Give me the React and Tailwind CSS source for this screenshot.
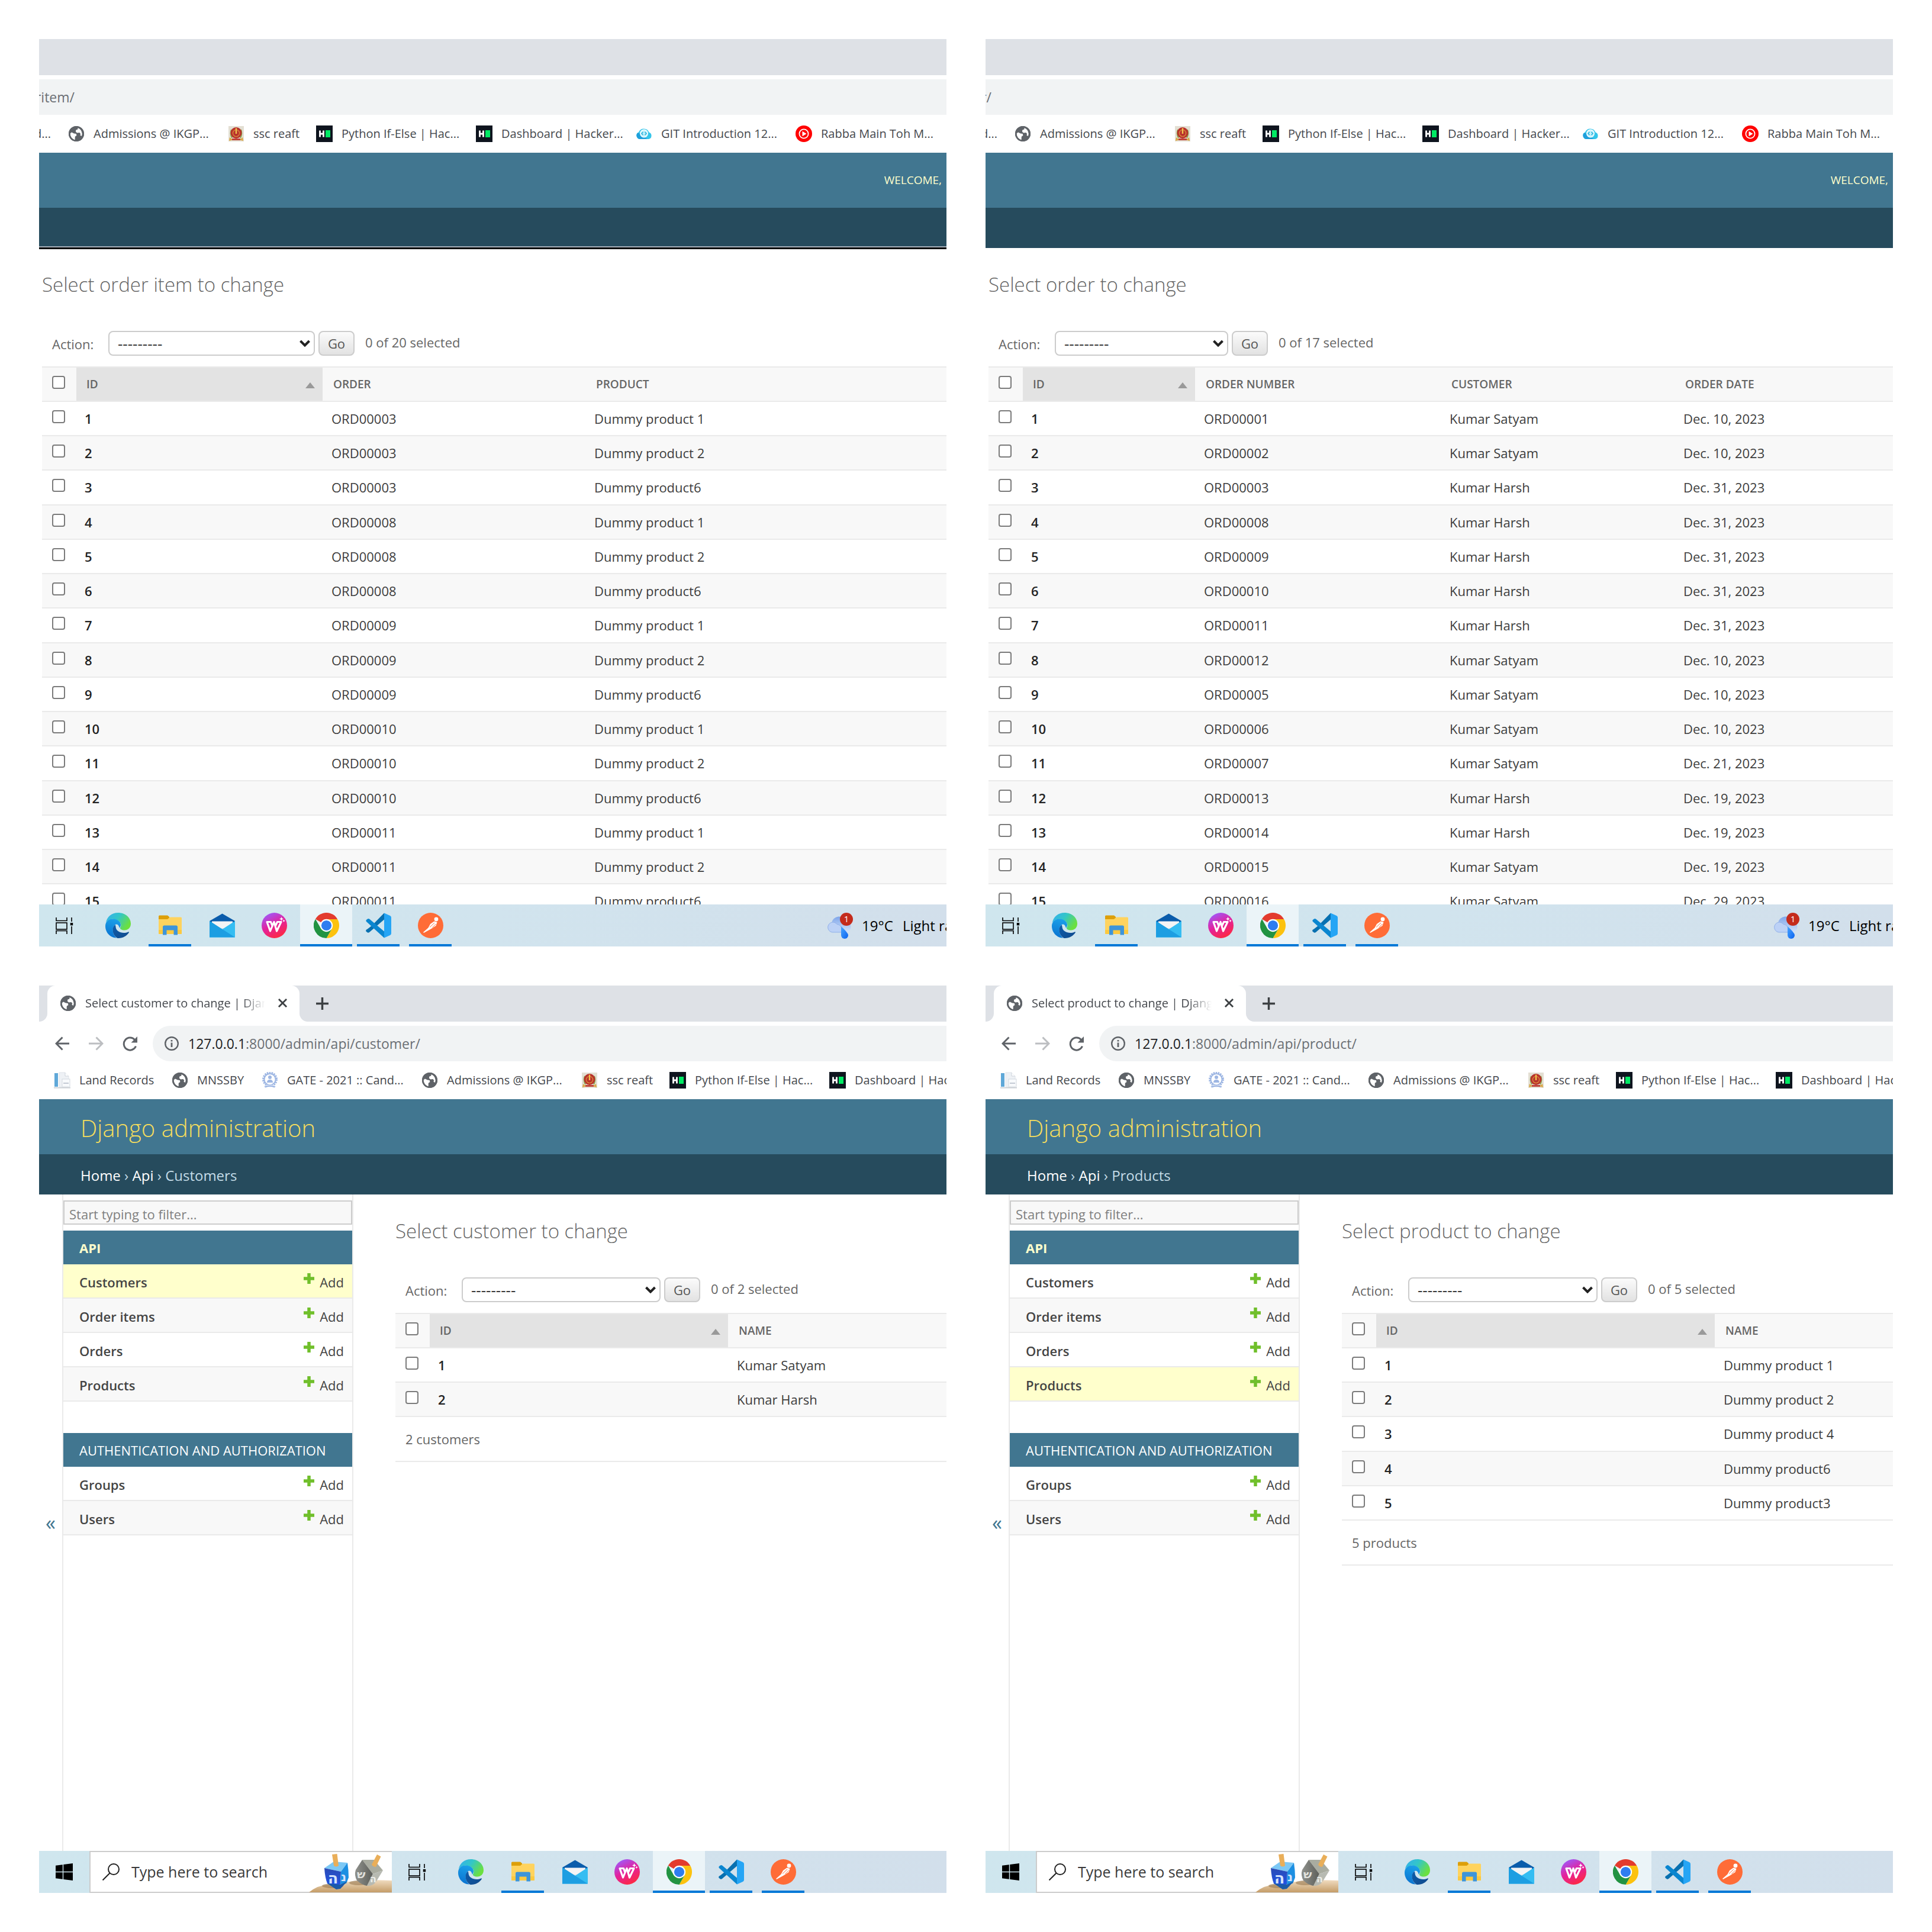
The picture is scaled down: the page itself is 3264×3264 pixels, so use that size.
import React, { useId } from "react";

/* ---------- small icons ---------- */

const Globe = () => (
  <svg viewBox="-1 -1 28 28" className="size-7 shrink-0" aria-hidden="true">
    <circle cx="13" cy="13" r="13" fill="#5f6368" />
    <path d="M2.6 12.6 L5 10.5 L9 12.6 L12.8 13 L13.4 16 L10.8 17.8 L10.6 23.6 A11.2 11.2 0 0 1 2.6 12.6Z" fill="#fff" />
    <path d="M15.4 3.2 L15.4 5.6 L12.2 6.8 L12 9.8 L14.4 11.4 L18.4 11 L20.2 13.2 L19.4 15.6 L22 17 A10.6 10.6 0 0 0 15.4 3.2Z" fill="#fff" />
    <circle cx="13" cy="13" r="11.8" fill="none" stroke="#5f6368" strokeWidth="2.4" />
  </svg>
);

const Emblem = () => (
  <svg viewBox="0 0 28 28" className="size-7 shrink-0" aria-hidden="true">
    <rect x="1" y="1" width="26" height="26" fill="#e3dfd3" />
    <path d="M3 20 Q14 30 25 20 L26 26 Q14 22 2 26Z" fill="#d9a846" />
    <path d="M6 7 Q3 14 7 21 M22 7 Q25 14 21 21" fill="none" stroke="#8aa34a" strokeWidth="2" />
    <circle cx="14" cy="12.5" r="9.4" fill="#b8322c" />
    <circle cx="14" cy="13" r="5.6" fill="none" stroke="#d98a3a" strokeWidth="1.4" />
    <path d="M14 4.5 V14" stroke="#f0c34e" strokeWidth="2.4" fill="none" />
    <path d="M7 22 h14 v3 h-14z" fill="#c0433a" />
  </svg>
);

const HackerRank = () => (
  <svg viewBox="0 0 28 28" className="size-7 shrink-0" aria-hidden="true">
    <rect width="28" height="28" fill="#0e141e" />
    <path d="M6.5 8.5 V19.5 M12.5 8.5 V19.5 M6 14 H12.5" stroke="#fff" strokeWidth="2.8" />
    <rect x="16" y="8" width="8" height="12" fill="#00ea64" />
  </svg>
);

const CloudEye = () => (
  <svg viewBox="0 0 28 28" className="size-7 shrink-0" aria-hidden="true">
    <path d="M6.5 23 A6.3 6.3 0 0 1 5 11.2 A9.5 9.5 0 0 1 22.5 11.5 A6 6 0 0 1 22 23Z" fill="#35c5ea" />
    <path d="M6.5 23 A6.3 6.3 0 0 1 3 12.5 Q8 13 12 17 T20 23Z" fill="#1ea0dc" />
    <circle cx="14" cy="13.5" r="6.2" fill="#bff0fb" stroke="#fff" strokeWidth="1.4" />
    <path d="M12.5 11 L10 13.5 L12.5 16 M15.5 11 L18 13.5 L15.5 16" fill="none" stroke="#2cb3dd" strokeWidth="1.6" />
  </svg>
);

const YtMusic = () => (
  <svg viewBox="0 0 28 28" className="size-7 shrink-0" aria-hidden="true">
    <circle cx="14" cy="14" r="14" fill="#f00" />
    <circle cx="14" cy="14" r="7.6" fill="none" stroke="#fff" strokeWidth="1.8" />
    <path d="M11.5 9.8 L18.5 14 L11.5 18.2Z" fill="#fff" />
  </svg>
);

const LandDoc = () => (
  <svg viewBox="0 0 28 28" className="size-7 shrink-0" aria-hidden="true">
    <rect x="1" y="2" width="6" height="23" fill="#5fa8d8" />
    <rect x="0" y="26" width="28" height="1.5" fill="#c4c9cf" />
    <path d="M9 1 H19 L25 7 V25 H9Z" fill="#eef1f5" stroke="#dde2e8" strokeWidth="1" />
    <path d="M19 1 V7 H25" fill="#fff" stroke="#cdd3db" strokeWidth="1" />
    <rect x="14" y="12" width="13" height="13" fill="#f8fafc" stroke="#d3d9e0" strokeWidth="1" />
    <path d="M16 19 H25" stroke="#c3cad4" strokeWidth="2" />
  </svg>
);

const GateSeal = () => (
  <svg viewBox="0 0 28 28" className="size-7 shrink-0" aria-hidden="true">
    <circle cx="14" cy="12.5" r="11.4" fill="none" stroke="#9db6e3" strokeWidth="3" strokeDasharray="2.6 1.4" />
    <circle cx="14" cy="12.5" r="9.6" fill="#fff" stroke="#9db6e3" strokeWidth="2" />
    <circle cx="14" cy="9" r="3" fill="#9db6e3" />
    <path d="M9 18 Q9 13 14 13 T19 18Z" fill="#9db6e3" />
    <path d="M4 24 Q14 20 24 24 L22 27 Q14 23.5 6 27Z" fill="#9db6e3" stroke="#fff" strokeWidth="0.8" />
  </svg>
);

const Plus = () => (
  <svg viewBox="0 0 18 18" className="-mt-3 size-[18px] shrink-0" aria-hidden="true">
    <path d="M9 0 V18 M0 9 H18" stroke="#70bf2b" strokeWidth="5.5" />
  </svg>
);

/* ---------- task bar icons ---------- */

const TaskView = () => (
  <svg viewBox="0 0 30 28" className="h-7 w-[30px]" fill="none" stroke="#000" strokeWidth="1.6" aria-hidden="true">
    <path d="M1 0 V5.500 H19 V0" />
    <rect x="1" y="9" width="18" height="11" />
    <path d="M1 28 V22.500 H19 V28" />
    <path d="M27 0 V7 M27 15 V28" />
    <rect x="24.8" y="9" width="4.400" height="4.400" fill="#000" stroke="none" />
  </svg>
);

const Edge = () => {
  const id = useId();
  return (
    <svg viewBox="0 0 43 43" className="size-[43px]" aria-hidden="true">
      <defs>
        <linearGradient id={id + "a"} x1="0" y1="0" x2="1" y2="0.5">
          <stop offset="0" stopColor="#35aef0" />
          <stop offset="0.5" stopColor="#33c6c8" />
          <stop offset="1" stopColor="#6be03f" />
        </linearGradient>
        <linearGradient id={id + "b"} x1="0.5" y1="0" x2="0.3" y2="1">
          <stop offset="0" stopColor="#1a9fe8" />
          <stop offset="1" stopColor="#0a72d0" />
        </linearGradient>
        <linearGradient id={id + "c"} x1="0" y1="0" x2="1" y2="1">
          <stop offset="0" stopColor="#0d5cab" />
          <stop offset="1" stopColor="#114a8c" />
        </linearGradient>
      </defs>
      <path d="M0.8 17 C2.5 7 10.5 0 21.5 0 C34 0 43 8.5 43 18.5 C43 25.5 38 29.5 32.5 29.5 C27.5 29.5 24.5 27.5 25 25.5 C27.5 22 26.5 16.5 22 13.5 C14 8.5 4.5 11 0.8 17Z" fill={`url(#${id}a)`} />
      <path d="M0.2 20 C1.5 13.5 7 10.500 13 10.5 C20.500 10.5 26 15 26 20.5 C26 23 24.5 25 24 26 C23 22 20.5 18 17 20 C11 24 11 36 19 42.5 C8 43 -1.5 32 0.2 20Z" fill={`url(#${id}b)`} />
      <path d="M16.500 20.5 C10 25 11.5 38 20.5 42.9 C29 43.5 36 39.5 39.8 33.5 C40.2 32.500 39.5 32 38.5 32.4 C30 36.5 18 32.5 17.5 24 C17.3 22 17.3 21 16.5 20.5Z" fill={`url(#${id}c)`} />
    </svg>
  );
};

const Folder = () => (
  <svg viewBox="0 0 43 43" className="size-[43px]" aria-hidden="true">
    <path d="M2 6 Q2 4.5 3.5 4.5 H17 L20 7 V12 H2Z" fill="#dd9f0a" />
    <path d="M2 11 H17 L21 7.5 H39.500 Q41 7.5 41 9 V36 H2Z" fill="#ffd35e" />
    <path d="M2 29 H41 V34.5 Q41 36 39.5 36 H3.5 Q2 36 2 34.5Z" fill="#fcc93f" />
    <path d="M9 37.5 V24 Q9 21.5 11.5 21.5 H31.5 Q34 21.5 34 24 V37.5 H27.5 V29.5 H15.5 V37.5Z" fill="#3e95d9" />
  </svg>
);

const Mail = () => (
  <svg viewBox="0 0 43 43" className="size-[43px]" aria-hidden="true">
    <path d="M0 14 L21.5 1.5 L43 14 V24 H0Z" fill="#0a5cab" />
    <path d="M4 14.5 H39 V26 H4Z" fill="#f4f4f5" />
    <path d="M0 14 L21.5 28 L43 14 V41.5 H0Z" fill="#35bdf2" />
    <path d="M0 14 L43 41.5 H0Z" fill="#1d9ee2" />
  </svg>
);

const Wps = () => {
  const id = useId();
  return (
    <svg viewBox="0 0 43 43" className="size-[43px]" aria-hidden="true">
      <defs>
        <linearGradient id={id} x1="0.2" y1="0" x2="0.7" y2="1">
          <stop offset="0" stopColor="#9b5cff" />
          <stop offset="0.5" stopColor="#e4219c" />
          <stop offset="1" stopColor="#ff2a3c" />
        </linearGradient>
      </defs>
      <circle cx="21.5" cy="21.5" r="21.5" fill={`url(#${id})`} />
      <path d="M17.5 21 L15.500 15.500 H9 L14.500 31 L21 15.500 L25.500 31 L33 15.500 H26.500 L24 21" fill="none" stroke="#fff" strokeWidth="3.2" strokeLinejoin="round" strokeLinecap="round" />
      <path d="M33.5 7 l1 2.5 l2.5 1 l-2.5 1 l-1 2.5 l-1 -2.5 l-2.5 -1 l2.5 -1z M37.5 11.5 l.7 1.600 l1.6 .7 l-1.6 .7 l-.7 1.6 l-.7 -1.6 l-1.6 -.7 l1.6 -.7z" fill="#fff" />
    </svg>
  );
};

const Chrome = () => (
  <svg viewBox="0 0 43 43" className="size-[43px]" aria-hidden="true">
    <path d="M21.5 21.5 L2.9 10.7 A21.5 21.5 0 0 1 40.1 10.7Z" fill="#e33b2e" />
    <path d="M21.5 11 H40.3 A21.5 21.5 0 0 1 21.5 43 L31 26.5Z" fill="#fcc20f" />
    <path d="M2.9 10.7 A21.5 21.5 0 0 0 21.5 43 L30.8 26.8 L12.2 26.8Z" fill="#229342" />
    <circle cx="21.5" cy="21.5" r="10.7" fill="#fff" />
    <circle cx="21.5" cy="21.5" r="8.6" fill="#2f7df0" />
  </svg>
);

const VsCode = () => (
  <svg viewBox="0 0 43 43" className="size-[43px]" aria-hidden="true">
    <path d="M31 0.5 L10.5 21.5 L3.5 27 L0.5 29 Q-0.3 31 1 32 L3 33.5 Q4.5 34.3 6 33 L31 11.5Z" fill="#0870b0" />
    <path d="M6 10.5 Q4.5 9.5 3 10.5 L1 12 Q-0.3 13.5 1 15 L31 42.5 V31.5Z" fill="#0a86d0" />
    <path d="M31 0.5 L41 5 Q43 6 43 8 V35 Q43 37 41 38 L31 42.5 Z" fill="#25a5f5" />
  </svg>
);

const Postman = () => (
  <svg viewBox="0 0 43 43" className="size-[43px]" aria-hidden="true">
    <circle cx="21.5" cy="21.5" r="21.5" fill="#ff6c37" />
    <circle cx="31" cy="11" r="3.4" fill="#fff" />
    <path d="M27.500 14.500 L32.500 16 L30.500 22 L25 25.500 L21 28 L10 34 L9 33 L17.500 25.500 L21 19Z" fill="#fff" />
    <path d="M20 24.500 L28 17 M24.500 25 L30.500 19" stroke="#ff6c37" strokeWidth="1" />
  </svg>
);

const WindowsLogo = () => (
  <svg viewBox="0 0 29 29" className="size-[29px]" aria-hidden="true">
    <path d="M0 3.8 L11.8 2.2 V13.8 H0Z M13.2 2 L29 0 V13.8 H13.2Z M0 15.2 H11.8 V26.8 L0 25.2Z M13.2 15.2 H29 V29 L13.2 27Z" fill="#000" />
  </svg>
);

const Dreidels = () => {
  const id = useId();
  return (
    <svg viewBox="0 0 140 69" className="h-[69px] w-[140px] shrink-0" aria-hidden="true">
      <defs>
        <linearGradient id={id + "s"} x1="0" y1="0" x2="0" y2="1">
          <stop offset="0" stopColor="#f0dcc0" />
          <stop offset="1" stopColor="#c59d68" />
        </linearGradient>
        <linearGradient id={id + "b"} x1="0" y1="0" x2="0" y2="1">
          <stop offset="0" stopColor="#2a4bb4" />
          <stop offset="1" stopColor="#1f55ee" />
        </linearGradient>
        <linearGradient id={id + "g"} x1="0" y1="0" x2="1" y2="0">
          <stop offset="0" stopColor="#8f918c" />
          <stop offset="1" stopColor="#5d5f5a" />
        </linearGradient>
      </defs>
      <path d="M0 69 Q14 57 36 55 Q56 52 78 50 Q100 47 140 49 V69Z" fill={`url(#${id}s)`} />
      <ellipse cx="40" cy="58" rx="18" ry="4" fill="#8b6a40" opacity="0.5" />
      <ellipse cx="84" cy="53" rx="16" ry="4" fill="#8b6a40" opacity="0.5" />
      <path d="M26 28 L42 17 L65 19 L54 34Z" fill="#7cc8f5" />
      <path d="M26 28 L54 34 L53 55 L45 62 L31 54 Q27 44 26 28Z" fill={`url(#${id}b)`} />
      <path d="M54 34 L65 19 Q67 32 67 44 L63 54 L53 56Z" fill="#1c8fe2" />
      <path d="M31 54 L53 56 L65 50 L53 63 L46 64Z" fill="#1c5aa8" />
      <path d="M39 5 L47.500 4 L50 24 Q46 27 42 24Z" fill="#e9ae59" />
      <path d="M90 14 H110 L125 32 L108 38Z" fill="#a9aca0" />
      <path d="M90 14 L108 38 L98 58 Q90 57 81 49 Q76 40 79 31Z" fill={`url(#${id}g)`} />
      <path d="M108 38 L125 32 L114 50 Q108 59 98 58Z" fill="#b7bab2" />
      <path d="M115 5 L121.500 8.500 L113 26 Q108 26 106 22Z" fill="#e9ae59" />
      <text x="32" y="54" fontSize="25" fontWeight="700" fill="#d5e3fb" fontFamily="DejaVu Sans, sans-serif">ה</text>
      <text x="54" y="50" fontSize="20" fontWeight="700" fill="#d5e3fb" fontFamily="DejaVu Sans, sans-serif">נ</text>
      <text x="81" y="45" fontSize="19" fontWeight="700" fill="#e0e1dd" fontFamily="DejaVu Sans, sans-serif">ש</text>
      <text x="103" y="52" fontSize="16" fontWeight="700" fill="#eceeea" fontFamily="DejaVu Sans, sans-serif">ה</text>
    </svg>
  );
};

const RainCloud = () => {
  const id = useId();
  return (
    <svg viewBox="0 0 44 44" className="size-11" aria-hidden="true">
      <defs>
        <linearGradient id={id} x1="0" y1="0" x2="0" y2="1">
          <stop offset="0" stopColor="#7fa6ea" />
          <stop offset="1" stopColor="#d3e2fa" />
        </linearGradient>
        <linearGradient id={id + "d"} x1="0" y1="0" x2="1" y2="1">
          <stop offset="0" stopColor="#4aa6ff" />
          <stop offset="1" stopColor="#0b63f0" />
        </linearGradient>
      </defs>
      <path d="M8 17 A13 12 0 0 1 33 14 A10 10 0 0 1 34 33 H10Z" fill={`url(#${id})`} />
      <path d="M9 33 A8.5 8.5 0 1 1 17 19.5 A9 9 0 0 1 24 33Z" fill="#bcd1f6" stroke="#8fb0ea" strokeWidth="1" />
      <path d="M24 23 Q36 34 36 38 A6 6 0 0 1 24 38Z" fill={`url(#${id}d)`} />
    </svg>
  );
};

/* ---------- browser chrome ---------- */

const bookmarkList = [
  { label: "Land Records", icon: LandDoc, width: "w-[127px]" },
  { label: "MNSSBY", icon: Globe, width: "w-20" },
  { label: "GATE - 2021 :: Cand...", icon: GateSeal, width: "w-[198px]" },
  { label: "Admissions @ IKGP...", icon: Globe, width: "w-[198px]" },
  { label: "ssc reaft", icon: Emblem, width: "w-[77px]" },
  { label: "Python If-Else | Hac...", icon: HackerRank, width: "w-[198px]" },
  { label: "Dashboard | Hacker...", icon: HackerRank, width: "w-[198px]" },
  { label: "GIT Introduction 12...", icon: CloudEye, width: "w-[198px]" },
  { label: "Rabba Main Toh M...", icon: YtMusic, width: "w-[198px]" },
];

function Bookmarks({ scrolled }) {
  const items = scrolled ? bookmarkList.slice(3) : bookmarkList.slice(0, 7);
  return (
    <nav aria-label="Bookmarks" className={"flex h-16 items-center overflow-hidden whitespace-nowrap text-[20px] text-[#45484d] " + (scrolled ? "" : "pl-[25px]")}>
      {scrolled && (
        <a href="#gate" className="mr-[29px] flex w-5 shrink-0 justify-end overflow-hidden">
          d...
        </a>
      )}
      {items.map(({ label, icon: Icon, width }) => (
        <a key={label} href="#bookmark" className="mr-[29px] flex shrink-0 items-center gap-[15px]">
          <Icon />
          <span className={width}>{label}</span>
        </a>
      ))}
    </nav>
  );
}

function TabStrip({ title }) {
  if (!title) return <div className="h-[61px] bg-[#dee1e6]" />;
  return (
    <div className="flex h-[61px] bg-[#dee1e6]">
      <div className="w-[14px] bg-white">
        <div className="h-full rounded-br-[14px] bg-[#dee1e6]" />
      </div>
      <div className="flex w-[426px] items-center rounded-t-[14px] bg-white pr-[21px] pb-0.5 pl-[21px]">
        <Globe />
        <span className="ml-[15px] w-[304px] overflow-hidden text-[20px] whitespace-nowrap text-[#45484d] [mask-image:linear-gradient(to_right,#000_87%,transparent)]">
          {title}
        </span>
        <button type="button" aria-label="Close tab" className="ml-auto">
          <svg viewBox="0 0 16 16" className="size-[15px]" stroke="#3c4043" strokeWidth="3">
            <path d="M1 1 L15 15 M15 1 L1 15" />
          </svg>
        </button>
      </div>
      <div className="w-7 bg-white">
        <div className="h-full rounded-bl-[14px] bg-[#dee1e6]" />
      </div>
      <button type="button" aria-label="New tab">
        <svg viewBox="0 0 22 22" className="size-[21px]" stroke="#3c4043" strokeWidth="3.6">
          <path d="M11 0 V22 M0 11 H22" />
        </svg>
      </button>
    </div>
  );
}

function AddressBar({ path, tail }) {
  if (tail) {
    return (
      <div className="mt-[7px] flex h-[60px] items-center overflow-hidden bg-[#f1f3f4] text-[23px] whitespace-nowrap text-[#6b6f74]">
        <span className={"flex justify-end overflow-hidden " + tail.width}>{tail.text}</span>
      </div>
    );
  }
  return (
    <div className="mt-[7px] flex h-[60px] items-center pl-[27px]">
      <div className="flex gap-8 text-[#5f6368]">
        <button type="button" aria-label="Back">
          <svg viewBox="0 0 25 24" className="h-6 w-[25px]" fill="none" stroke="currentColor" strokeWidth="3">
            <path d="M24 12 H2 M12.5 1.5 L2 12 L12.5 22.5" />
          </svg>
        </button>
        <button type="button" aria-label="Forward" className="text-[#bcbec1]">
          <svg viewBox="0 0 25 24" className="h-6 w-[25px]" fill="none" stroke="currentColor" strokeWidth="3">
            <path d="M0 12 H22 M12.5 1.5 L23 12 L12.5 22.5" />
          </svg>
        </button>
        <button type="button" aria-label="Reload">
          <svg viewBox="0 0 25 25" className="size-[25px]" fill="none" stroke="currentColor" strokeWidth="3">
            <path d="M22.5 16.5 A10.5 10.5 0 1 1 20.5 5.5" />
            <path d="M25 0 V10.500 H14.5Z" fill="currentColor" stroke="none" />
          </svg>
        </button>
      </div>
      <div className="ml-[26px] flex h-full min-w-0 flex-1 items-center rounded-l-full bg-[#f1f3f4] pl-5 text-[23px] whitespace-nowrap text-[#6b6f74]">
        <svg viewBox="0 0 24 24" className="size-6 shrink-0" fill="none" stroke="#5f6368" strokeWidth="2.4" aria-hidden="true">
          <circle cx="12" cy="12" r="10.8" />
          <path d="M12 10.5 V18 M12 6 V8.6" strokeWidth="2.8" />
        </svg>
        <span className="ml-4">
          <span className="text-[#202124]">127.0.0.1</span>:8000{path}
        </span>
      </div>
    </div>
  );
}

/* ---------- admin page ---------- */

function ActionBar({ selected, selectWidth, id }) {
  return (
    <form className="mt-[54px] flex h-[42px] items-center pl-[17px] text-[22px] text-[#666]" onSubmit={(e) => e.preventDefault()}>
      <label htmlFor={id} className="w-[95px] pt-0.5">
        Action:
      </label>
      <span className={"relative h-full shrink-0 " + selectWidth}>
        <select id={id} className="size-full appearance-none rounded-lg border-2 border-[#ccc] bg-white pl-[14px] text-[26px] text-[#333]">
          <option>---------</option>
          <option>Delete selected</option>
        </select>
        <svg viewBox="0 0 18 12" className="pointer-events-none absolute top-[15px] right-2 h-3 w-[18px]" fill="none" stroke="#222" strokeWidth="4" aria-hidden="true">
          <path d="M1.5 2 L9 9.5 L16.5 2" />
        </svg>
      </span>
      <button type="submit" className="ml-[6px] h-full w-[61px] rounded-lg border-2 border-[#ccc] bg-linear-to-b from-[#fbfbfb] to-[#e2e2e2] text-[#555]">
        Go
      </button>
      <span className="mb-1 ml-[18px]">{selected}</span>
    </form>
  );
}

const Check = ({ label }) => (
  <input
    type="checkbox"
    aria-label={label}
    className="block size-[22px] appearance-none rounded border-2 border-[#7b7b7b] bg-white"
  />
);

function ResultTable({ columns, widths, rows, footer }) {
  return (
    <>
      <table className="mt-[18px] w-full table-fixed border-collapse text-left text-[22px] whitespace-nowrap text-[#3d3d3d]">
        <colgroup>
          <col className="w-[58px]" />
          {widths.map((w, i) => (
            <col key={i} className={w} />
          ))}
          <col />
        </colgroup>
        <thead>
          <tr className="h-[58px] border-y-2 border-[#eaeaea] bg-[#f8f8f8] text-[19px] text-[#666]">
            <th className="pt-[14px] pl-[17px] align-top">
              <Check label="Select all" />
            </th>
            <th className="bg-[#e3e3e3] pr-[13px] pl-[17px] font-semibold">
              <span className="flex items-center justify-between">
                ID
                <svg viewBox="0 0 16 10" className="mt-1 h-[10px] w-4" aria-hidden="true">
                  <path d="M8 0 L16 10 H0Z" fill="#999" />
                </svg>
              </span>
            </th>
            {columns.map((c) => (
              <th key={c} className="pl-[18px] font-semibold">
                {c}
              </th>
            ))}
          </tr>
        </thead>
        <tbody>
          {rows.map((row, i) => (
            <tr key={i} className="h-[58px] border-b-2 border-[#eaeaea] even:bg-[#f8f8f8] nth-[4n-1]:h-[59px]">
              <td className="pt-[14px] pl-[17px] align-top">
                <Check label={"Select row " + (i + 1)} />
              </td>
              <th className="pl-[14px] font-semibold text-[#222]">
                <a href="#row">{i + 1}</a>
              </th>
              {row.map((cell, j) => (
                <td key={j} className="pl-[15px]">
                  {cell}
                </td>
              ))}
            </tr>
          ))}
        </tbody>
      </table>
      {footer && <p className="flex h-[76px] items-center border-b-2 border-[#eaeaea] pl-[17px] text-[22px] text-[#666]">{footer}</p>}
    </>
  );
}

const sections = [
  { title: "API", bold: true, items: ["Customers", "Order items", "Orders", "Products"] },
  { title: "AUTHENTICATION AND AUTHORIZATION", items: ["Groups", "Users"] },
];

function Sidebar({ current }) {
  return (
    <>
      <button type="button" aria-label="Toggle navigation" className="w-[39px] shrink-0 text-[34px] text-[#417690]">
        «
      </button>
      <aside className="w-[492px] shrink-0 border-x-2 border-[#eaeaea] pt-[10px]">
        <input
          type="text"
          aria-label="Filter navigation items"
          placeholder="Start typing to filter..."
          className="block h-[41px] w-full border-2 border-[#ccc] bg-[#f8f8f8] pt-1 pl-2 text-[22px] placeholder:text-[#808080]"
        />
        {sections.map((s, i) => (
          <section key={s.title} className={i ? "mt-[53px]" : "mt-[10px]"}>
            <h2 className={"flex h-[57px] items-center bg-[#417690] pt-0.5 pl-[27px] text-[22px] whitespace-nowrap " + (s.bold ? "font-bold text-[#ffc]" : "text-white")}>
              {s.title}
            </h2>
            {s.items.map((item) => (
              <div
                key={item}
                className={
                  "flex h-[58px] items-center border-b-2 border-[#eaeaea] pt-1 pr-[14px] pl-[27px] text-[22px] text-[#444] " +
                  (item === current ? "bg-[#ffc]" : "odd:bg-[#f8f8f8]")
                }
              >
                <a href="#model" className="font-semibold">
                  {item}
                </a>
                <a href="#add" className="ml-auto flex items-center gap-[9px]">
                  <Plus />
                  Add
                </a>
              </div>
            ))}
          </section>
        ))}
      </aside>
    </>
  );
}

function AdminHeader({ crumb, ruled }) {
  return (
    <header className="whitespace-nowrap">
      <div className="flex h-[93px] items-center bg-[#417690]">
        {crumb ? (
          <h1 className="pt-1 pl-[70px] text-[40px] font-light text-[#f5dd5d]">Django administration</h1>
        ) : (
          <span className="mr-2 ml-auto text-[19px] text-[#ffc]">WELCOME,</span>
        )}
      </div>
      <div className={"flex items-center bg-[#264b5d] text-[24px] text-[#c4dce8] " + (ruled ? "-mb-0.5 h-[70px] border-b-3 border-[#0d0d0d] shadow-[inset_0_-2px_#a3adb8]" : "h-[68px]")}>
        {crumb && (
          <nav aria-label="Breadcrumbs" className="pt-1 pl-[70px]">
            <a href="#home" className="text-white">Home</a> › <a href="#api" className="text-white">Api</a> › {crumb}
          </nav>
        )}
      </div>
    </header>
  );
}

/* ---------- Windows task bar ---------- */

const apps = [
  { name: "Edge", icon: Edge },
  { name: "File Explorer", icon: Folder, open: true },
  { name: "Mail", icon: Mail },
  { name: "WPS Office", icon: Wps },
  { name: "Chrome", icon: Chrome, active: true },
  { name: "VS Code", icon: VsCode, open: true },
  { name: "Postman", icon: Postman, open: true },
];

function TaskBar({ search }) {
  return (
    <footer className="flex h-[71px] shrink-0 overflow-hidden bg-linear-to-r from-[#cfe6ee] via-[#d1e4ee] to-[#d2dfeb] whitespace-nowrap text-black">
      {search && (
        <>
          <button type="button" aria-label="Start" className="flex w-[85px] shrink-0 items-center justify-center">
            <WindowsLogo />
          </button>
          <label className="flex w-[511px] shrink-0 items-center border-2 border-r-0 border-[#ccc] bg-white pl-5">
            <svg viewBox="0 0 29 29" className="size-[29px] shrink-0" fill="none" stroke="#222" strokeWidth="2" aria-hidden="true">
              <circle cx="19" cy="10" r="9" />
              <path d="M12.5 16.5 L0.5 28.5" />
            </svg>
            <input
              type="text"
              aria-label="Search"
              placeholder="Type here to search"
              className="ml-5 min-w-0 flex-1 text-[25px] placeholder:text-[#3a3a3a]"
            />
            <Dreidels />
          </label>
        </>
      )}
      <button type="button" aria-label="Task view" className="flex w-[89px] shrink-0 items-center justify-center pr-1">
        <TaskView />
      </button>
      {apps.map(({ name, icon: Icon, open, active }) => (
        <button
          key={name}
          type="button"
          aria-label={name}
          className={"flex w-[88px] shrink-0 flex-col items-stretch " + (active ? "bg-[#ebf4f8]" : "px-2")}
        >
          <span className="flex flex-1 items-center justify-center pt-1">
            <Icon />
          </span>
          <span className={"h-1 " + (open || active ? "bg-[#0078d7]" : "")} />
        </button>
      ))}
      {!search && (
        <div className="mr-[-31px] ml-auto flex shrink-0 items-center text-[24px]">
          <span className="relative">
            <RainCloud />
            <span className="absolute top-0 right-0 flex size-[22px] items-center justify-center rounded-full bg-[#c42b1c] text-[15px] leading-none text-white">
              1
            </span>
          </span>
          <span className="ml-[15px]">19°C</span>
          <span className="ml-4">Light rain</span>
        </div>
      )}
    </footer>
  );
}

/* ---------- one browser window ---------- */

function Screen({ tab, path, tail, crumb, ruled, title, ...list }) {
  const id = useId();
  return (
    <article className="flex aspect-square min-w-0 flex-col overflow-hidden bg-white">
      <TabStrip title={tab} />
      <AddressBar path={path} tail={tail} />
      <Bookmarks scrolled={!crumb} />
      <AdminHeader crumb={crumb} ruled={ruled} />
      <div className="flex min-h-0 flex-1 overflow-hidden">
        {crumb && <Sidebar current={crumb} />}
        <main className={"min-w-0 flex-1 pt-[38px] " + (crumb ? "pl-[71px]" : "pl-[5px]")}>
          <h2 className="h-12 text-[33px] leading-[48px] font-light whitespace-nowrap text-[#666]">{title}</h2>
          <ActionBar id={id} selected={list.selected} selectWidth={list.selectWidth} />
          <ResultTable columns={list.columns} widths={list.widths} rows={list.rows} footer={list.footer} />
        </main>
      </div>
      <TaskBar search={!!crumb} />
    </article>
  );
}

const products = ["Dummy product 1", "Dummy product 2", "Dummy product6"];
const orderItems = ["ORD00003", "ORD00008", "ORD00009", "ORD00010", "ORD00011"].flatMap((order) =>
  products.map((p) => [order, p])
);

const orders = [
  ["ORD00001", "Kumar Satyam", "Dec. 10, 2023"],
  ["ORD00002", "Kumar Satyam", "Dec. 10, 2023"],
  ["ORD00003", "Kumar Harsh", "Dec. 31, 2023"],
  ["ORD00008", "Kumar Harsh", "Dec. 31, 2023"],
  ["ORD00009", "Kumar Harsh", "Dec. 31, 2023"],
  ["ORD00010", "Kumar Harsh", "Dec. 31, 2023"],
  ["ORD00011", "Kumar Harsh", "Dec. 31, 2023"],
  ["ORD00012", "Kumar Satyam", "Dec. 10, 2023"],
  ["ORD00005", "Kumar Satyam", "Dec. 10, 2023"],
  ["ORD00006", "Kumar Satyam", "Dec. 10, 2023"],
  ["ORD00007", "Kumar Satyam", "Dec. 21, 2023"],
  ["ORD00013", "Kumar Harsh", "Dec. 19, 2023"],
  ["ORD00014", "Kumar Harsh", "Dec. 19, 2023"],
  ["ORD00015", "Kumar Satyam", "Dec. 19, 2023"],
  ["ORD00016", "Kumar Satyam", "Dec. 29, 2023"],
];

export default function App() {
  return (
    <div className="grid grid-cols-2 gap-[66px] bg-white p-[66px] font-['Open_Sans','Noto_Sans',sans-serif]">
      <Screen
        tail={{ text: "ritem/", width: "w-[60px]" }}
        ruled
        title="Select order item to change"
        selected="0 of 20 selected"
        selectWidth="w-[349px]"
        columns={["ORDER", "PRODUCT"]}
        widths={["w-[416px]", "w-[444px]"]}
        rows={orderItems}
      />
      <Screen
        tail={{ text: "r/", width: "w-[10px]" }}
        title="Select order to change"
        selected="0 of 17 selected"
        selectWidth="w-[293px]"
        columns={["ORDER NUMBER", "CUSTOMER", "ORDER DATE"]}
        widths={["w-[291px]", "w-[415px]", "w-[395px]"]}
        rows={orders}
      />
      <Screen
        tab="Select customer to change | Django site admin"
        path="/admin/api/customer/"
        crumb="Customers"
        title="Select customer to change"
        selected="0 of 2 selected"
        selectWidth="w-[336px]"
        columns={["NAME"]}
        widths={["w-[504px]"]}
        rows={[["Kumar Satyam"], ["Kumar Harsh"]]}
        footer="2 customers"
      />
      <Screen
        tab="Select product to change | Django site admin"
        path="/admin/api/product/"
        crumb="Products"
        title="Select product to change"
        selected="0 of 5 selected"
        selectWidth="w-80"
        columns={["NAME"]}
        widths={["w-[572px]"]}
        rows={[["Dummy product 1"], ["Dummy product 2"], ["Dummy product 4"], ["Dummy product6"], ["Dummy product3"]]}
        footer="5 products"
      />
    </div>
  );
}
